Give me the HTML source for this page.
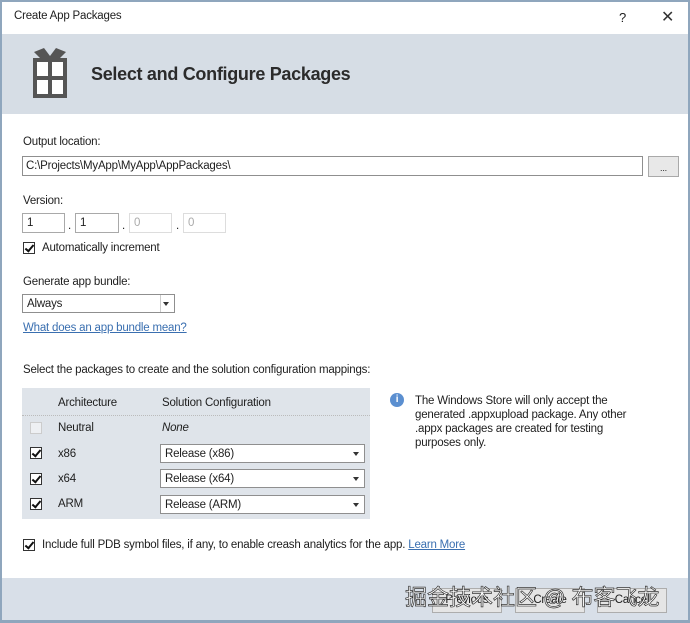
<!DOCTYPE html>
<html><head><meta charset="utf-8"><style>
*{margin:0;padding:0;box-sizing:border-box}
body{width:690px;height:623px;background:#fff;font-family:"Liberation Sans","Noto Sans CJK SC",sans-serif;font-size:11.5px;color:#1e1e1e;position:relative;overflow:hidden;letter-spacing:-0.2px}
.a{position:absolute;white-space:nowrap}
.box{position:absolute;border:1px solid #a9a9a9;background:#fff}
.cb{position:absolute;width:12px;height:12px;border:1px solid #333;background:#fff}
.cb:after{content:"";position:absolute;left:3px;top:0px;width:3px;height:7px;border:solid #111;border-width:0 2px 2px 0;transform:rotate(40deg)}
.sel{position:absolute;border:1px solid #8f8f8f;background:#fff;height:19px;padding:3px 4px 0}
.sel:after{content:"";position:absolute;right:5px;top:7px;border:3.5px solid transparent;border-top:4px solid #333}
.btn{position:absolute;border:1px solid #adadad;background:#e5e5e5;text-align:center;line-height:23px;height:25px;width:70px}
.link{color:#3a6fb0;text-decoration:underline}
</style></head><body>
<div class="a" style="left:0;top:0;width:690px;height:623px;border:2px solid #8fa6bd;border-bottom:3px solid #8fa6bd"></div>
<div class="a" style="left:14px;top:10px">Create App Packages</div>
<div class="a" style="left:619px;top:10px;font-size:13px">?</div>
<div class="a" style="left:661px;top:7px;font-size:16px;color:#333">✕</div>
<div class="a" style="left:2px;top:34px;width:686px;height:80px;background:#d6dde5"></div>
<svg class="a" style="left:30px;top:46px" width="42" height="54" viewBox="0 0 42 54">
<path d="M4 6 L14 2 L20 10 L26 2 L36 6 L30 12 L10 12Z" fill="#555"/>
<rect x="3" y="12" width="34" height="40" fill="#555"/>
<rect x="7" y="16" width="11" height="14" fill="#fff"/><rect x="22" y="16" width="11" height="14" fill="#fff"/>
<rect x="7" y="34" width="11" height="14" fill="#fff"/><rect x="22" y="34" width="11" height="14" fill="#fff"/>
</svg>
<div class="a" style="left:91px;top:64px;font-size:18px;font-weight:bold;color:#2b2b2b;letter-spacing:-0.3px">Select and Configure Packages</div>

<div class="a" style="left:23px;top:136px">Output location:</div>
<div class="box" style="left:22px;top:156px;width:621px;height:20px;border-color:#8f8f8f"></div>
<div class="a" style="left:26px;top:160px">C:\Projects\MyApp\MyApp\AppPackages\</div>
<div class="box" style="left:648px;top:156px;width:31px;height:21px;background:#e8e8e8;text-align:center;font-size:9px;line-height:22px">...</div>

<div class="a" style="left:23px;top:195px">Version:</div>
<div class="box" style="left:22px;top:213px;width:43px;height:20px"></div><div class="a" style="left:27px;top:217px">1</div>
<div class="a" style="left:68px;top:220px">.</div>
<div class="box" style="left:75px;top:213px;width:44px;height:20px"></div><div class="a" style="left:80px;top:217px">1</div>
<div class="a" style="left:122px;top:220px">.</div>
<div class="box" style="left:129px;top:213px;width:43px;height:20px;border-color:#ddd"></div><div class="a" style="left:134px;top:217px;color:#aaa">0</div>
<div class="a" style="left:176px;top:220px">.</div>
<div class="box" style="left:183px;top:213px;width:43px;height:20px;border-color:#ddd"></div><div class="a" style="left:188px;top:217px;color:#aaa">0</div>
<div class="cb" style="left:23px;top:242px"></div>
<div class="a" style="left:42px;top:242px">Automatically increment</div>

<div class="a" style="left:23px;top:276px">Generate app bundle:</div>
<div class="sel" style="left:22px;top:294px;width:153px">Always</div>
<div class="a" style="left:160px;top:295px;width:1px;height:17px;background:#ccc"></div>
<div class="a link" style="left:23px;top:322px">What does an app bundle mean?</div>

<div class="a" style="left:23px;top:364px">Select the packages to create and the solution configuration mappings:</div>
<div class="a" style="left:22px;top:388px;width:348px;height:131px;background:#dfe4ea"></div>
<div class="a" style="left:22px;top:415px;width:348px;border-top:1px dotted #bbb"></div>
<div class="a" style="left:58px;top:397px">Architecture</div>
<div class="a" style="left:162px;top:397px">Solution Configuration</div>
<div class="a" style="left:30px;top:422px;width:12px;height:12px;border:1px solid #ccc;background:#eef0f3"></div>
<div class="a" style="left:58px;top:422px">Neutral</div>
<div class="a" style="left:162px;top:422px;font-style:italic">None</div>
<div class="cb" style="left:30px;top:447px"></div><div class="a" style="left:58px;top:448px">x86</div>
<div class="sel" style="left:160px;top:444px;width:205px">Release (x86)</div>
<div class="cb" style="left:30px;top:473px"></div><div class="a" style="left:58px;top:473px">x64</div>
<div class="sel" style="left:160px;top:469px;width:205px">Release (x64)</div>
<div class="cb" style="left:30px;top:498px"></div><div class="a" style="left:58px;top:498px">ARM</div>
<div class="sel" style="left:160px;top:495px;width:205px">Release (ARM)</div>

<div class="a" style="left:390px;top:393px;width:14px;height:14px;border-radius:50%;background:#5b8fd0;color:#fff;font-size:10px;text-align:center;line-height:14px;font-weight:bold">i</div>
<div class="a" style="left:415px;top:394px;line-height:14px">The Windows Store will only accept the<br>generated .appxupload package. Any other<br>.appx packages are created for testing<br>purposes only.</div>

<div class="cb" style="left:23px;top:539px"></div>
<div class="a" style="left:42px;top:539px">Include full PDB symbol files, if any, to enable creash analytics for the app. <span class="link">Learn More</span></div>

<div class="a" style="left:2px;top:578px;width:686px;height:42px;background:#d8dfe8"></div>
<div class="btn" style="left:432px;top:588px">Previous</div>
<div class="btn" style="left:515px;top:588px">Create</div>
<div class="btn" style="left:597px;top:588px">Cancel</div>
<div class="a" style="left:405px;top:580px;font-size:22px;color:#fff;-webkit-text-stroke:0.7px #333;letter-spacing:0">掘金技术社区 @ 布客飞龙</div>
</body></html>
